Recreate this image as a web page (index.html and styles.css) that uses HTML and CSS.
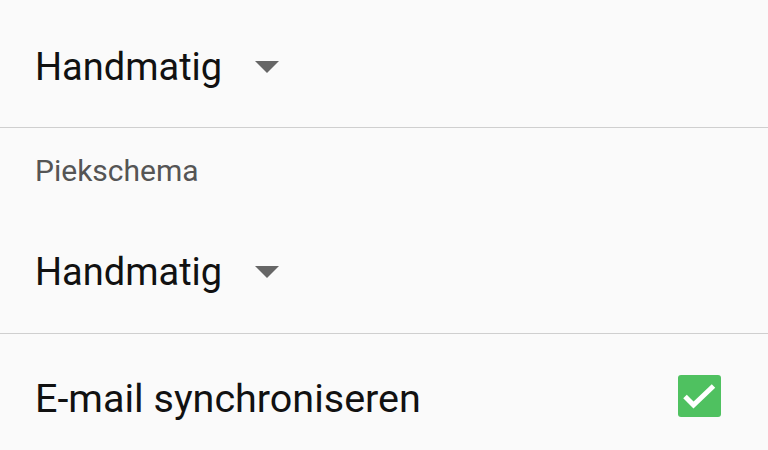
FILE: index.html
```html
<!DOCTYPE html>
<html lang="nl">
<head>
  <meta charset="UTF-8">
  <meta name="viewport" content="width=device-width, initial-scale=1.0">
  <title>Synchronisatie</title>
  <link rel="stylesheet" href="styles.css">
</head>
<body>
  <div class="settings">
    <div class="row row-top">
      <div class="dropdown">
        <span class="value">Handmatig</span>
        <span class="caret"></span>
      </div>
    </div>
    <div class="divider"></div>

    <div class="section">
      <div class="label">Piekschema</div>
      <div class="row row-mid">
        <div class="dropdown">
          <span class="value">Handmatig</span>
          <span class="caret"></span>
        </div>
      </div>
    </div>
    <div class="divider"></div>

    <div class="row row-check">
      <span class="value value-lg">E-mail synchroniseren</span>
      <span class="checkbox">
        <svg viewBox="0 0 43 42" width="43" height="42">
          <path d="M7 21.5l8.5 8.5L35.5 11" fill="none" stroke="#fff" stroke-width="5"/>
        </svg>
      </span>
    </div>
  </div>
</body>
</html>
```

FILE: styles.css
```css
html, body {
  margin: 0;
  padding: 0;
}
body {
  font-family: Roboto, "Noto Sans", sans-serif;
  background: #fafafa;
  color: #111;
}
.settings {
  width: 768px;
  height: 450px;
  overflow: hidden;
}
.row {
  display: flex;
  align-items: flex-start;
  padding: 0 47px 0 35px;
  box-sizing: border-box;
}
.row-top {
  height: 127px;
  padding-top: 45px;
}
.row-mid {
  padding-top: 61px;
  padding-bottom: 39px;
}
.row-check {
  padding-top: 41px;
  justify-content: space-between;
}
.divider {
  height: 1px;
  background: #cfcfcf;
}
.section {
  padding-top: 25px;
}
.label {
  padding-left: 35px;
  font-size: 30px;
  line-height: 36px;
  color: #555;
}
.dropdown {
  display: flex;
  align-items: center;
}
.value {
  font-size: 38px;
  line-height: 44px;
}
.value-lg {
  font-size: 39.5px;
  line-height: 48px;
}
.caret {
  width: 0;
  height: 0;
  margin-left: 33px;
  border-left: 12.5px solid transparent;
  border-right: 12.5px solid transparent;
  border-top: 12px solid #666;
}
.checkbox {
  display: block;
  width: 43px;
  height: 42px;
  border-radius: 3px;
  background: #4fc160;
}
.checkbox svg {
  display: block;
}
```
